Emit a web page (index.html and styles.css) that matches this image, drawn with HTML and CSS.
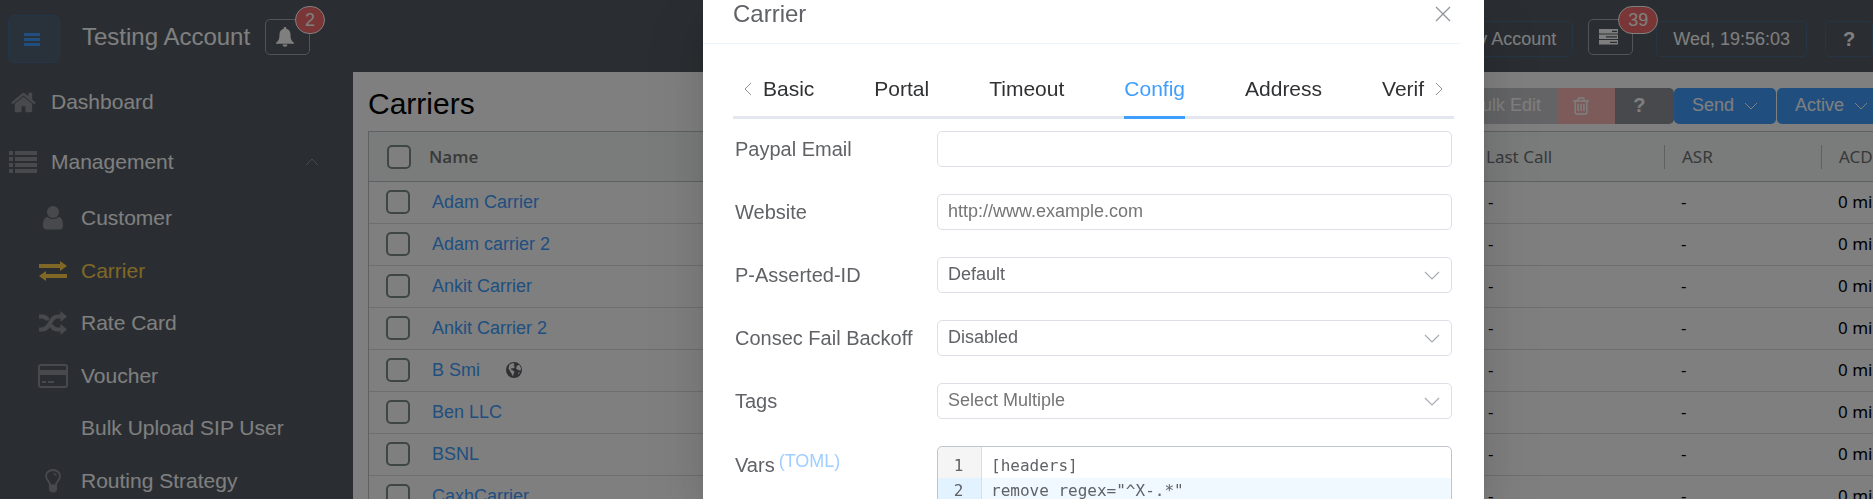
FILE: index.html
```html
<!DOCTYPE html>
<html lang="en">
<head>
<meta charset="utf-8">
<title>Carriers</title>
<link rel="stylesheet" href="styles.css">
</head>
<body>
<div class="app">
  <header class="topbar">
    <button class="menu-toggle" aria-label="Toggle menu"><svg width="16" height="13" viewBox="0 0 16 13"><path fill="currentColor" d="M0 0h16v3H0zM0 5h16v3H0zM0 10h16v3H0z"/></svg></button>
    <span class="account-name">Testing Account</span>
    <div class="icon-wrap">
      <button class="icon-button" aria-label="Notifications"><svg width="18" height="20" viewBox="0 0 18 20"><path fill="currentColor" d="M9 0c.8 0 1.300.5 1.300 1.300v.5c2.700.6 4.200 2.700 4.200 5.700 0 4.500 1 6.500 3.500 8.300v.9H0v-.9c2.500-1.800 3.500-3.800 3.500-8.300 0-3 1.500-5.100 4.200-5.700v-.5C7.700.5 8.200 0 9 0zM6.500 17.500h5a2.500 2.300 0 0 1-5 0z"/></svg></button>
      <span class="badge">2</span>
    </div>
    <div class="topbar-right">
      <button class="text-button my-account">My Account</button>
      <div class="icon-wrap">
        <button class="icon-button" aria-label="Tasks"><svg width="19" height="16" viewBox="0 0 19 16"><path fill="currentColor" d="M0 0h19v4.500H0zM0 5.500h19V10H0zM0 11h19v4.500H0z"/><path stroke="#545c64" stroke-width="1.200" d="M13 2.300h5M7 7.800h11M11 13.300h7"/></svg></button>
        <span class="badge">39</span>
      </div>
      <button class="text-button clock">Wed, 19:56:03</button>
      <button class="text-button help">?</button>
    </div>
  </header>
  <div class="body">
    <nav class="sidebar">
      <a class="nav-item" href="#"><span class="nav-icon"><svg width="27" height="27" viewBox="0 0 1792 1792"><path fill="currentColor" d="M1472 992v480q0 26-19 45t-45 19h-384v-384h-256v384h-384q-26 0-45-19t-19-45v-480q0-1 .5-3t.5-3l575-474 575 474q1 2 1 6zm223-69l-62 74q-8 9-21 11h-3q-13 0-21-7l-692-577-692 577q-12 8-24 7-13-2-21-11l-62-74q-8-10-7-23.500t11-21.500l719-599q32-26 76-26t76 26l244 204v-195q0-14 9-23t23-9h192q14 0 23 9t9 23v408l219 182q10 8 11 21.500t-7 23.500z"/></svg></span>Dashboard</a>
      <a class="nav-item" href="#"><span class="nav-icon"><svg width="28" height="22" viewBox="0 0 28 22"><path fill="currentColor" d="M0 0h4v4H0zM6 0h22v4H6zM0 6h4v4H0zM6 6h22v4H6zM0 12h4v4H0zM6 12h22v4H6zM0 18h4v4H0zM6 18h22v4H6z"/></svg></span>Management<svg class="nav-caret" width="14" height="8" viewBox="0 0 14 8"><path fill="none" stroke="currentColor" d="M1 7l6-6 6 6"/></svg></a>
      <div class="submenu">
        <a class="nav-item" href="#"><span class="nav-icon"><svg width="20" height="24" viewBox="0 0 20 24"><circle cx="10" cy="6" r="6" fill="currentColor"/><path fill="currentColor" d="M4.500 11c3 2.700 8 2.700 11 0C19 11.500 20 15 20 19.500c0 2.500-1.500 4-3.500 4h-13c-2 0-3.500-1.500-3.500-4C0 15 1 11.500 4.500 11z"/></svg></span>Customer</a>
        <a class="nav-item active" href="#"><span class="nav-icon"><svg width="28" height="20" viewBox="0 0 28 20"><path fill="currentColor" d="M0 3h21V0l7 5-7 5V7H0zM28 13H7v-3l-7 5 7 5v-3h21z"/></svg></span>Carrier</a>
        <a class="nav-item" href="#"><span class="nav-icon"><svg width="28" height="24" viewBox="0 0 28 24"><g fill="none" stroke="currentColor" stroke-width="4"><path d="M0 5.500h3c3 0 4.500 1.200 6 3.500M12 14c2 4 4 4.500 7 4.500h3"/><path d="M0 18.500h3c9 0 7-13 16-13h3"/></g><path fill="currentColor" d="M21.500 0l6.500 5.500-6.500 5.500zM21.500 13l6.500 5.500-6.500 5.500z"/></svg></span>Rate Card</a>
        <a class="nav-item" href="#"><span class="nav-icon"><svg width="30" height="24" viewBox="0 0 30 24"><rect x="1" y="1" width="28" height="22" rx="2" fill="none" stroke="currentColor" stroke-width="2"/><path fill="currentColor" d="M1 6h28v5H1zM4 17h4v2H4zM10 17h6v2h-6z"/></svg></span>Voucher</a>
        <a class="nav-item" href="#"><span class="nav-icon"></span>Bulk Upload SIP User</a>
        <a class="nav-item" href="#"><span class="nav-icon"><svg width="16" height="24" viewBox="0 0 16 24"><path fill="none" stroke="currentColor" stroke-width="1.800" d="M5 16c0-3.500-4-4.500-4-9a7 6 0 0 1 14 0c0 4.500-4 5.500-4 9"/><path fill="none" stroke="currentColor" stroke-width="1.200" d="M8 4.500c2 0 3 1 3 2.500"/><path fill="currentColor" d="M4 15.500h8v5c0 1-1.500 3-4 3s-4-2-4-3z"/></svg></span>Routing Strategy</a>
      </div>
    </nav>
    <main class="content">
      <div class="content-head">
        <h1 class="page-title">Carriers</h1>
        <div class="toolbar">
          <button class="tool bulk">Bulk Edit</button>
          <button class="tool trash" aria-label="Delete"><svg width="16" height="18" viewBox="192 128 1408 1536"><path fill="currentColor" d="M704 736v576q0 14-9 23t-23 9h-64q-14 0-23-9t-9-23v-576q0-14 9-23t23-9h64q14 0 23 9t9 23zm256 0v576q0 14-9 23t-23 9h-64q-14 0-23-9t-9-23v-576q0-14 9-23t23-9h64q14 0 23 9t9 23zm256 0v576q0 14-9 23t-23 9h-64q-14 0-23-9t-9-23v-576q0-14 9-23t23-9h64q14 0 23 9t9 23zm128 724v-948h-896v948q0 22 7 40.500t14.500 27 10.500 8.500h832q3 0 10.500-8.500t14.500-27 7-40.500zm-672-1076h448l-48-117q-7-9-17-11h-317q-10 2-17 11zm928 32v64q0 14-9 23t-23 9h-96v948q0 83-47 143.500t-113 60.500h-832q-66 0-113-58.500t-47-141.500v-952h-96q-14 0-23-9t-9-23v-64q0-14 9-23t23-9h309l70-167q15-37 54-63t79-26h320q40 0 79 26t54 63l70 167h309q14 0 23 9t9 23z"/></svg></button>
          <button class="tool info">?</button>
          <button class="tool primary">Send<svg width="14" height="8" viewBox="0 0 14 8"><path fill="none" stroke="currentColor" d="M1 1l6 6 6-6"/></svg></button>
          <button class="tool primary">Active<svg width="14" height="8" viewBox="0 0 14 8"><path fill="none" stroke="currentColor" d="M1 1l6 6 6-6"/></svg></button>
        </div>
      </div>
      <table class="grid">
        <colgroup><col class="c-check"><col><col class="c-call"><col class="c-asr"><col class="c-acd"></colgroup>
        <thead><tr><th><input type="checkbox" aria-label="Select all"></th><th class="th-name">Name</th><th>Last Call</th><th><span class="split"></span>ASR</th><th><span class="split"></span>ACD</th></tr></thead>
        <tbody>
          <tr><td><input type="checkbox" aria-label="Select Adam Carrier"></td><td><a href="#">Adam Carrier</a></td><td class="call">-</td><td>-</td><td>0 mi</td></tr>
          <tr><td><input type="checkbox" aria-label="Select Adam carrier 2"></td><td><a href="#">Adam carrier 2</a></td><td class="call">-</td><td>-</td><td>0 mi</td></tr>
          <tr><td><input type="checkbox" aria-label="Select Ankit Carrier"></td><td><a href="#">Ankit Carrier</a></td><td class="call">-</td><td>-</td><td>0 mi</td></tr>
          <tr><td><input type="checkbox" aria-label="Select Ankit Carrier 2"></td><td><a href="#">Ankit Carrier 2</a></td><td class="call">-</td><td>-</td><td>0 mi</td></tr>
          <tr><td><input type="checkbox" aria-label="Select B Smi"></td><td><a href="#">B Smi</a><svg class="globe" width="16" height="16" viewBox="0 0 16 16"><circle cx="8" cy="8" r="8" fill="#606266"/><path fill="#fff" d="M3.500 2.500L7 1l1.500 1-1 1.500L9 5 7 6.500 5.500 6 5 7.500l2 1 1.500 1.500-1 2-.5 2.500-1.500-3L4 9 2.500 6.500zM11 4l2-1.500 1.800 3L15 8l-1.500.5-2-1-1.500-1zM12.500 10.500l1.500-.5-2 3z"/></svg></td><td class="call">-</td><td>-</td><td>0 mi</td></tr>
          <tr><td><input type="checkbox" aria-label="Select Ben LLC"></td><td><a href="#">Ben LLC</a></td><td class="call">-</td><td>-</td><td>0 mi</td></tr>
          <tr><td><input type="checkbox" aria-label="Select BSNL"></td><td><a href="#">BSNL</a></td><td class="call">-</td><td>-</td><td>0 mi</td></tr>
          <tr><td><input type="checkbox" aria-label="Select CaxhCarrier"></td><td><a href="#">CaxhCarrier</a></td><td class="call">-</td><td>-</td><td>0 mi</td></tr>
        </tbody>
      </table>
    </main>
  </div>
</div>

<div class="overlay">
  <section class="dialog" role="dialog" aria-labelledby="dialog-title">
    <header class="dialog-head">
      <h2 class="dialog-title" id="dialog-title">Carrier</h2>
      <button class="close" aria-label="Close"><svg width="16" height="16" viewBox="0 0 16 16"><path fill="none" stroke="currentColor" stroke-width="1.300" d="M1 1l14 14M15 1L1 15"/></svg></button>
    </header>
    <div class="dialog-body">
      <div class="tabs">
        <button class="tab-arrow" aria-label="Previous tabs"><svg width="8" height="14" viewBox="0 0 8 14"><path fill="none" stroke="currentColor" d="M7 1L1 7l6 6"/></svg></button>
        <div class="tab-list" role="tablist">
          <button class="tab" role="tab">Basic</button>
          <button class="tab" role="tab">Portal</button>
          <button class="tab" role="tab">Timeout</button>
          <button class="tab selected" role="tab" aria-selected="true">Config</button>
          <button class="tab" role="tab">Address</button>
          <button class="tab" role="tab">Verif</button>
        </div>
        <button class="tab-arrow" aria-label="Next tabs"><svg width="8" height="14" viewBox="0 0 8 14"><path fill="none" stroke="currentColor" d="M1 1l6 6-6 6"/></svg></button>
      </div>
      <form class="form">
        <label class="label" for="paypal">Paypal Email</label>
        <input class="field" id="paypal" type="text">
        <label class="label" for="website">Website</label>
        <input class="field" id="website" type="text" placeholder="http://www.example.com">
        <label class="label" for="pai">P-Asserted-ID</label>
        <div class="select-wrap"><select class="field" id="pai"><option>Default</option></select><svg class="caret" width="16" height="9" viewBox="0 0 16 9"><path fill="none" stroke="currentColor" stroke-width="1.200" d="M1 1l7 7 7-7"/></svg></div>
        <label class="label" for="backoff">Consec Fail Backoff</label>
        <div class="select-wrap"><select class="field" id="backoff"><option>Disabled</option></select><svg class="caret" width="16" height="9" viewBox="0 0 16 9"><path fill="none" stroke="currentColor" stroke-width="1.200" d="M1 1l7 7 7-7"/></svg></div>
        <label class="label" for="tags">Tags</label>
        <div class="select-wrap"><select class="field empty" id="tags"><option>Select Multiple</option></select><svg class="caret" width="16" height="9" viewBox="0 0 16 9"><path fill="none" stroke="currentColor" stroke-width="1.200" d="M1 1l7 7 7-7"/></svg></div>
        <div class="label" id="vars-label">Vars<a class="format" href="#">(TOML)</a></div>
        <div class="editor" role="textbox" aria-multiline="true" aria-labelledby="vars-label">
          <div class="line"><span class="num">1</span><code class="code">[headers]</code></div>
          <div class="line current"><span class="num">2</span><code class="code">remove_regex="^X-.*"</code></div>
        </div>
      </form>
    </div>
  </section>
</div>
</body>
</html>
```
FILE: styles.css
```css
* { box-sizing: border-box; }

body {
  margin: 0;
  overflow: hidden;
  font-family: "Liberation Sans", Arial, sans-serif;
  font-size: 18px;
  color: #000;
}

button, input, select { font: inherit; }
button { cursor: pointer; }
a { text-decoration: none; }
svg { display: block; flex: none; }

.app {
  display: flex;
  flex-direction: column;
  height: 100vh;
  background: #545c64;
}

/* Top bar */
.topbar {
  display: flex;
  flex: none;
  align-items: center;
  height: 72px;
  padding: 6px 0 0 8px;
  color: #fff;
}

.menu-toggle {
  display: grid;
  place-items: center;
  width: 52px;
  height: 48px;
  padding: 0 4px 0 0;
  color: #409eff;
  background: #526374;
  border: 1px solid #466c92;
  border-radius: 6px;
}

.account-name {
  margin-left: 22px;
  padding-bottom: 4px;
  font-size: 24px;
  white-space: nowrap;
}

.icon-wrap {
  position: relative;
  margin-left: 15px;
  padding-bottom: 4px;
}

.icon-button {
  display: grid;
  place-items: center;
  width: 45px;
  height: 36px;
  padding: 0 5px 0 0;
  color: #fff;
  background: transparent;
  border: 1px solid #a4a8ad;
  border-radius: 5px;
}

.badge {
  position: absolute;
  left: 30px;
  top: -13px;
  min-width: 30px;
  height: 28px;
  padding: 0 9px;
  font-size: 18px;
  line-height: 26px;
  text-align: center;
  background: #f56c6c;
  border: 1px solid #fff;
  border-radius: 14px;
}

.topbar-right {
  display: flex;
  flex: 1;
  align-items: center;
  justify-content: flex-end;
}

.text-button {
  height: 36px;
  padding: 0 16px;
  color: #fff;
  white-space: nowrap;
  background: transparent;
  border: 1px solid #4c6b8a;
  border-radius: 5px;
}

.clock { margin-left: 23px; }

.help {
  width: 48px;
  margin-left: 18px;
  font-size: 20px;
  font-weight: bold;
}

/* Sidebar */
.body {
  display: flex;
  flex: 1;
  min-height: 0;
}

.sidebar {
  flex: none;
  width: 353px;
  overflow: hidden;
}

.nav-item {
  display: flex;
  align-items: center;
  gap: 13px;
  height: 60px;
  padding: 0 34px 0 8px;
  font-size: 21px;
  color: #fff;
  white-space: nowrap;
}

.submenu .nav-item { height: 52px; padding-left: 38px; }
.submenu .nav-item:nth-child(even) { height: 53px; }

.nav-icon {
  display: flex;
  flex: none;
  justify-content: center;
  width: 30px;
  color: #909399;
}

.nav-caret { margin-left: auto; color: #909399; }
.active, .active .nav-icon { color: #ffd04b; }

/* Content */
.content {
  flex: 1;
  min-width: 0;
  padding-left: 15px;
  overflow: hidden;
  background: #fff;
}

.content-head {
  display: flex;
  align-items: center;
  justify-content: space-between;
  height: 59px;
  padding-top: 8px;
}

.page-title {
  margin: 0;
  padding-bottom: 4px;
  font-size: 30px;
  font-weight: normal;
}

.toolbar {
  display: flex;
  margin-right: -14px;
}

.tool {
  display: flex;
  align-items: center;
  justify-content: center;
  gap: 10px;
  height: 36px;
  padding: 0 18px;
  color: #fff;
  white-space: nowrap;
  border: 0;
}

.bulk { padding: 0 16px; background: #c8c9cc; }
.trash { width: 58px; padding: 0 28px 0 18px; background: #fab6b6; }
.info {
  width: 59px;
  padding-right: 28px;
  font-size: 20px;
  font-weight: bold;
  background: #909399;
  border-radius: 0 5px 5px 0;
}
.primary { margin-right: 1px; background: #409eff; border-radius: 5px; }

.grid {
  width: 100%;
  table-layout: fixed;
  border-spacing: 0;
  border-top: 1px solid #bdc3c7;
  border-left: 1px solid #bdc3c7;
  font-family: "Noto Sans", sans-serif;
  font-size: 17px;
}

.c-check { width: 46px; }
.c-call { width: 196px; }
.c-asr { width: 157px; }
.c-acd { width: 52px; }

.grid th, .grid td {
  height: 42px;
  padding: 0 0 0 18px;
  line-height: 24px;
  text-align: left;
  white-space: nowrap;
  border-bottom: 1px solid #d9dcde;
}

.grid td { padding: 0 0 2px 17px; }
.grid .call { padding-left: 20px; }

.grid th {
  height: 50px;
  font-weight: normal;
  color: #6f7273;
  background: #f5f7f7;
  border-bottom-color: #bdc3c7;
}

.grid .th-name {
  padding-left: 14px;
  font-family: "Open Sans", "Noto Sans", sans-serif;
  font-weight: 600;
}

.grid a {
  font-family: "Liberation Sans", Arial, sans-serif;
  font-size: 18px;
  color: #409eff;
}

.grid input {
  display: block;
  width: 24px;
  height: 24px;
  margin: 0;
  appearance: none;
  background: #fff;
  border: 2px solid #7f8c8d;
  border-radius: 5px;
}

.split {
  float: left;
  width: 1px;
  height: 24px;
  margin-left: -18px;
  background: #bdc3c7;
}

.globe {
  display: inline-block;
  margin-left: 26px;
  vertical-align: -2px;
}

/* Dialog */
.overlay {
  position: fixed;
  inset: 0;
  display: grid;
  grid-template-columns: 703fr 781fr 389fr;
  background: rgba(0, 0, 0, 0.5);
}

.dialog {
  grid-column: 2;
  min-width: 0;
  overflow: hidden;
  color: #606266;
  background: #fff;
  box-shadow: 0 24px 72px 24px rgba(0, 0, 0, 0.04), 0 18px 48px rgba(0, 0, 0, 0.12), 0 12px 24px -12px rgba(0, 0, 0, 0.16);
}

.dialog-head {
  display: flex;
  align-items: center;
  justify-content: space-between;
  height: 44px;
  margin-right: 24px;
  padding: 0 9px 15px 30px;
  border-bottom: 1px solid #ecf5ff;
}

.dialog-title {
  margin: 0;
  font-size: 24px;
  font-weight: normal;
}

.close, .tab-arrow {
  padding: 0;
  color: #909399;
  background: none;
  border: 0;
}

.dialog-body { padding: 15px 30px 0; }

.tabs {
  display: flex;
  justify-content: space-between;
  height: 60px;
  border-bottom: 3px solid #e4e7ed;
}

.tab-arrow {
  display: grid;
  flex: none;
  place-items: center;
  width: 30px;
  padding-top: 3px;
}

.tab-list {
  display: flex;
  flex: 1;
  gap: 60px;
  min-width: 0;
}

.tab {
  height: 60px;
  padding: 2px 0 0;
  font-size: 21px;
  color: #303133;
  background: none;
  border: 0;
  border-bottom: 3px solid transparent;
}

.selected { color: #409eff; border-color: #409eff; }

.form {
  display: grid;
  grid-template-columns: 202px 1fr;
  grid-auto-rows: 36px;
  row-gap: 27px;
  align-items: center;
  padding: 12px 2px 0;
}

.label { font-size: 20px; white-space: nowrap; }
.format {
  margin-left: 4px;
  font-size: 18px;
  vertical-align: 5px;
  color: #a0cfff;
}

.field {
  display: block;
  width: 100%;
  height: 36px;
  padding: 0 10px 2px;
  font-size: 18px;
  color: #606266;
  appearance: none;
  background: #fff;
  border: 1px solid #dcdfe6;
  border-radius: 5px;
}

.field::placeholder, .empty { color: #757575; }

.select-wrap { position: relative; }

.caret {
  position: absolute;
  top: 14px;
  right: 12px;
  color: #a8abb2;
  pointer-events: none;
}

.editor {
  align-self: start;
  overflow: hidden;
  font-family: "DejaVu Sans Mono", monospace;
  font-size: 16px;
  line-height: 25px;
  background: linear-gradient(to right, #f5f5f5 43px, #ddd 43px, #ddd 44px, #fff 44px);
  border: 1px solid #c0c4cc;
  border-radius: 5px;
  padding-top: 6px;
}

.line { display: flex; }

.num {
  width: 44px;
  padding-right: 2px;
  text-align: center;
  border-right: 1px solid #ddd;
}

.code { flex: 1; padding-left: 9px; font: inherit; }
.current { background: #f0f9ff; }
.current .num { background: #e2f2ff; }
```
